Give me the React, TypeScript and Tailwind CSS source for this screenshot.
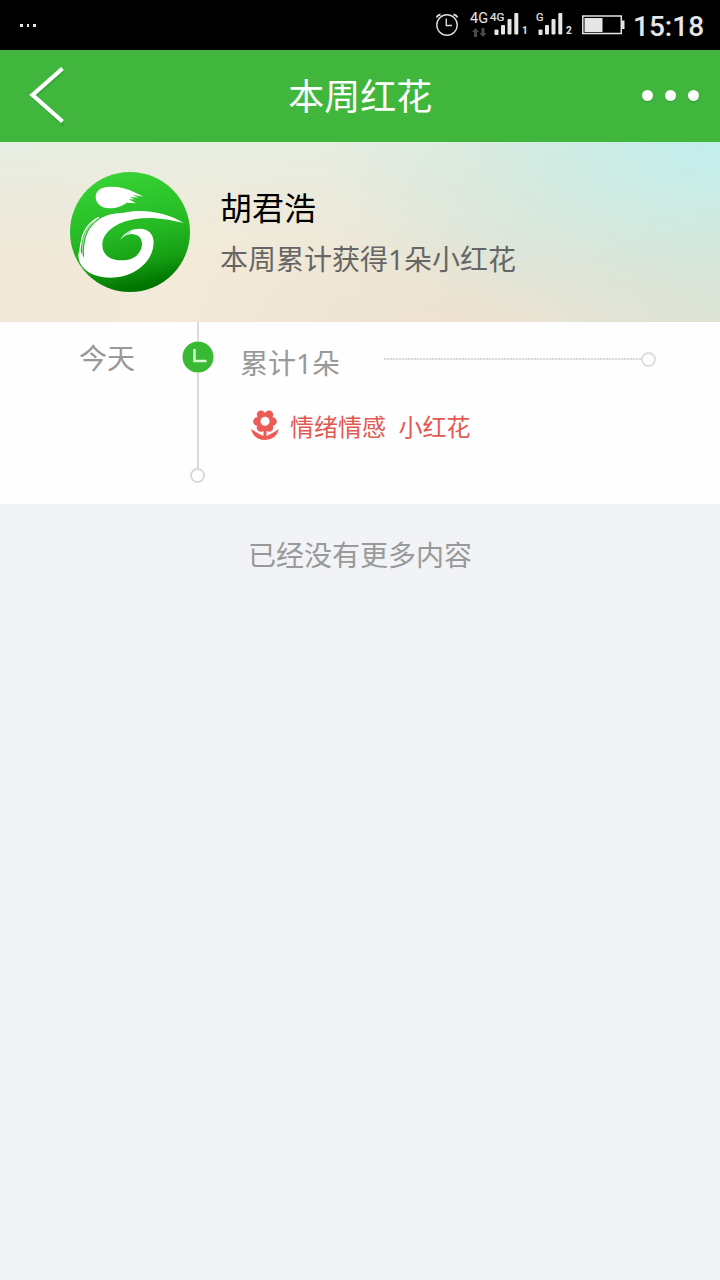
import React from 'react';

const SignalBars: React.FC = () => (
  <svg className="h-[22px] w-[26px]" viewBox="0 0 26 22" fill="#e6e6e6">
    <rect x="0.5" y="16.5" width="4" height="5.500" rx="1" />
    <rect x="7" y="12" width="4" height="9.5" rx="1" />
    <rect x="13.5" y="6" width="4" height="15.5" rx="1" />
    <rect x="20.3" y="0" width="4" height="21.5" rx="1" />
  </svg>
);

const StatusBar: React.FC = () => (
  <div className="flex h-[50px] bg-black text-[#e6e6e6] font-['Roboto',sans-serif]">
    <div className="flex gap-[4px] pl-5 pt-[24px]">
      {[0, 1, 2].map((i) => (
        <span key={i} className="h-[2.5px] w-[2.5px] bg-[#e6e6e6]" />
      ))}
    </div>
    <div className="ml-auto flex">
      {/* Alarm */}
      <svg className="mr-[11px] mt-[13px] h-6 w-6" viewBox="0 0 24 24" fill="none" stroke="#dcdcdc" strokeWidth="1.4">
        <circle cx="12" cy="12" r="10.2" />
        <path d="M11.3 5.5V12.500H17" />
        <path d="M1.500 4.500Q2.500 2 5.500 1.500M18.500 1.500Q21.500 2 22.500 4.500" strokeWidth="2" />
      </svg>
      <div className="flex w-[20px] flex-col pt-[12px]">
        <span className="text-[14.5px] leading-[14px]">4G</span>
        <svg className="ml-[2px] mt-[1.5px] h-[9px] w-[15px]" viewBox="0 0 15 9" fill="#4a4a4a">
          <path d="M3.5 0L7 4H5V9H2V4H0zM9.500 0H12.500V5H14.500L11 9L7.500 5H9.500z" />
        </svg>
      </div>
      <div className="relative flex w-[46px] pl-[4px] pt-[13px]">
        <span className="absolute left-0 top-[12px] text-[11.5px] leading-[11px] [-webkit-text-stroke:0.2px]">4G</span>
        <SignalBars />
        <span className="pl-[2px] pt-[13px] text-[10px] font-bold leading-[10px]">1</span>
      </div>
      <div className="relative flex w-[46px] pl-[2px] pt-[13px]">
        <span className="absolute left-0 top-[12px] text-[11px] leading-[11px] [-webkit-text-stroke:0.2px]">G</span>
        <SignalBars />
        <span className="pl-[2px] pt-[13px] text-[10px] font-bold leading-[10px]">2</span>
      </div>
      {/* Battery */}
      <svg className="mt-[15px] h-5 w-[43px]" viewBox="0 0 43 20">
        <rect x="0.8" y="1" width="38.500" height="17.500" fill="none" stroke="#e6e6e6" strokeWidth="1.500" />
        <rect x="2.500" y="3" width="18" height="14" fill="#e6e6e6" />
        <rect x="39.500" y="5.500" width="3" height="8.500" fill="#e6e6e6" />
      </svg>
      <span className="ml-[8px] mr-[15px] mt-[10px] w-[72px] text-[28px] font-medium leading-[33px]">15:18</span>
    </div>
  </div>
);

const Header: React.FC = () => (
  <header className="flex h-[92px] items-center justify-between bg-[#40b73c]">
    <svg className="ml-[26px] h-[64px] w-[44px]" viewBox="0 0 44 64" fill="none">
      <path d="M38 6.500L7.500 34L38 61.500" stroke="#2f962d" strokeWidth="3" opacity="0.5" />
      <path d="M36.500 4.500L6.500 31L36.500 57.500" stroke="#fff" strokeWidth="4.200" />
    </svg>
    <h1 className="ml-[8px] pt-[1px] text-[36px] leading-[48px] text-white">本周红花</h1>
    <div className="flex gap-[12.5px] pb-[1px] pr-[21px]">
      {[0, 1, 2].map((i) => (
        <span key={i} className="h-[10.5px] w-[10.5px] rounded-full bg-white shadow-[0_1px_1px_#2f962d]" />
      ))}
    </div>
  </header>
);

const Avatar: React.FC = () => (
  <svg className="h-[120px] w-[120px]" viewBox="30 30 360 360">
    <defs>
      <linearGradient id="avatar" x1="0.4" y1="0" x2="0.6" y2="1">
        <stop offset="0" stopColor="#37d336" />
        <stop offset="0.5" stopColor="#25b924" />
        <stop offset="0.75" stopColor="#16a014" />
        <stop offset="0.95" stopColor="#007400" />
      </linearGradient>
    </defs>
    <circle cx="210" cy="210" r="180" fill="url(#avatar)" />
    <g fill="#fff">
      <path d="M143 75C170 73 200 79 226 92L251 104L218 98L236 107L208 104L224 112L206 112L228 124L200 122C187 132 169 139 149 139C122 139 107 123 107 105C107 88 121 76 143 75Z" />
      <path d="M371 183C321 151 246 140 192 152C165 153 140 158 122 169C100 184 84 203 77 228C71 250 72 270 72 288L64 272C58 262 56 270 55 280C56 323 100 347 150 347C224 347 280 299 281 241C281 216 265 201 240 200C212 200 191 214 180 234C190 223 201 217 213 216C234 216 247 228 246 247C245 277 218 296 184 295C148 295 127 276 127 249C128 209 170 181 222 172C274 162 326 173 371 183Z" />
    </g>
    <path d="M117 166C85 182 69 208 64 239C60 257 59 269 60 284" fill="none" stroke="#fff" strokeWidth="4" />
    <path d="M108 175C82 194 71 220 68 250L68 280" fill="none" stroke="#fff" strokeWidth="2" />
    <path d="M188 229Q198 213 214 209" fill="none" stroke="#29b928" strokeWidth="1.500" />
  </svg>
);

const Profile: React.FC = () => (
  <section className="flex h-[180px] items-center bg-[radial-gradient(ellipse_55%_110%_at_100%_0%,#c1eeee_0%,#c6ece6cc_30%,#cfe8dd66_65%,transparent_100%),linear-gradient(180deg,#e3f0e6b3_0%,#e6eee266_35%,transparent_65%),radial-gradient(ellipse_40%_60%_at_62%_105%,#f0e2d0_0%,#f0e2d066_50%,transparent_100%),linear-gradient(90deg,#f0e8d8_0%,#f3ead9_25%,#f0e8d7_45%,#e1e5d8_70%,#dce2d4_100%)] pl-[70px]">
    <Avatar />
    <div className="ml-[30px]">
      <div className="text-[32px] leading-[48px] text-black">胡君浩</div>
      <div className="mt-[6px] text-[28px] leading-[42px] text-[#666]">本周累计获得1朵小红花</div>
    </div>
  </section>
);

const Flower: React.FC = () => (
  <svg className="h-[31px] w-[30px]" viewBox="0 0 30 31" fill="#ec5b55">
    <path d="M1 19Q7 23 13.500 26V20H16.500V26Q23 23 29 19Q26 30 15 30Q4 30 1 19Z" />
    <circle cx="11" cy="4.700" r="4.200" />
    <circle cx="19" cy="4.700" r="4.200" />
    <circle cx="7.500" cy="11.500" r="4.300" />
    <circle cx="22.500" cy="11.500" r="4.300" />
    <circle cx="11" cy="17.500" r="4.300" />
    <circle cx="19" cy="17.500" r="4.300" />
    <circle cx="15" cy="11.500" r="8.500" />
    <circle cx="15" cy="11.200" r="4.500" fill="#fff" />
  </svg>
);

const Timeline: React.FC = () => (
  <section className="flex h-[182px] bg-[#fefefe] text-[#999]">
    <div className="w-[181.5px] pl-[79px] pt-[15px] text-[28px] leading-[42px]">今天</div>
    <div className="flex w-8 flex-col items-center">
      <span className="h-[19px] w-[2px] bg-[#d9d9d9]" />
      <svg className="h-8 w-8" viewBox="0 0 32 32">
        <circle cx="16" cy="16" r="15.500" fill="#3ab935" />
        <path d="M12.500 8V20H24.500" fill="none" stroke="#d9f6d6" strokeWidth="2.500" />
      </svg>
      <span className="h-[95px] w-[2px] bg-[#d9d9d9]" />
      <span className="h-[15px] w-[15px] rounded-full border-2 border-[#d9d9d9]" />
    </div>
    <div className="ml-[26.5px] flex-1">
      <div className="flex h-[76px] pt-[20px]">
        <span className="w-[144px] text-[28px] leading-[42px]">累计1朵</span>
        <span className="mt-[16px] h-[2px] w-[257px] bg-[repeating-linear-gradient(90deg,#dadada_0_2px,#f0f0f0_2px_3px)]" />
        <span className="mt-[10px] h-[15px] w-[15px] rounded-full border-2 border-[#dedede]" />
      </div>
      <div className="flex items-center pl-[10px] pt-[8px]">
        <Flower />
        <span className="ml-[10px] mt-[3px] whitespace-pre text-[24px] leading-[36px] text-[#e35850]">情绪情感  小红花</span>
      </div>
    </div>
  </section>
);

const App: React.FC = () => {
  return (
    <div className="min-h-screen bg-[#f1f3f6] font-['Noto_Sans','Noto_Sans_CJK_SC',sans-serif]">
      <StatusBar />
      <Header />
      <Profile />
      <Timeline />
      <p className="pt-[30px] text-center text-[28px] leading-[42px] text-[#999]">已经没有更多内容</p>
    </div>
  );
};

export default App;
